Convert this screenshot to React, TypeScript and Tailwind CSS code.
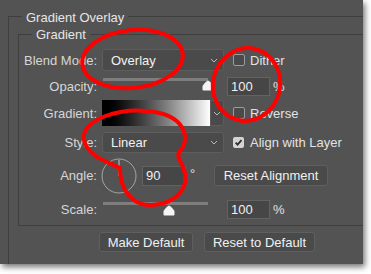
import React from 'react';

function Chevron() {
  return (
    <svg width="8" height="5" viewBox="0 0 8 5">
      <path d="M1 1 L4 4 L7 1" stroke="#b8b8b8" strokeWidth="1" fill="none" />
    </svg>
  );
}

function Checkbox({ checked = false }: { checked?: boolean }) {
  if (checked) {
    return (
      <span className="w-[11px] h-[11px] rounded-[2px] bg-[#d4d4d4] flex items-center justify-center">
        <svg width="9" height="9" viewBox="0 0 9 9">
          <path d="M1.6 4.6 L3.6 6.6 L7.5 2.2" stroke="#2e2e2e" strokeWidth="1.8" fill="none" />
        </svg>
      </span>
    );
  }
  return <span className="block w-[12px] h-[12px] rounded-[2px] border border-[#9c9c9c] bg-[#4a4a4a]" />;
}

function Slider({ pct, top = 5 }: { pct: number; top?: number }) {
  return (
    <div className="relative w-[105px] self-stretch ml-[6px]">
      <div className="mt-[3px] h-[3px] bg-[#7d7d7d]" />
      <svg
        className="absolute"
        style={{ left: `calc(${pct}% - 6px)`, top }}
        width="12"
        height="11"
        viewBox="0 0 12 11"
      >
        <path
          d="M6 0.5 C7 0.5 11.5 5 11.5 6.5 V9.5 Q11.5 10.5 10.5 10.5 H1.5 Q0.5 10.5 0.5 9.5 V6.5 C0.5 5 5 0.5 6 0.5 Z"
          fill="#f4f4f4"
        />
      </svg>
    </div>
  );
}

function Label({ children }: { children: React.ReactNode }) {
  return <div className="w-[78px] text-right text-[#d6d6d6] shrink-0">{children}</div>;
}

function NumberBox({ value, w = 43, h = 19 }: { value: string; w?: number; h?: number }) {
  return (
    <div
      className="bg-[#464646] border border-[#626262] text-[#f0f0f0] pl-[3px] flex items-center"
      style={{ width: w, height: h }}
    >
      {value}
    </div>
  );
}

export default function App() {
  return (
    <div className="w-[371px] h-[274px] bg-white relative overflow-hidden font-['Liberation_Sans',Arial,sans-serif] text-[13px] leading-none">
      <div className="w-[363px] h-[264px] bg-[#535353] shadow-[2px_3px_6px_rgba(0,0,0,0.55)] pt-[16px] pl-[8px]">
        {/* Gradient Overlay group */}
        <div className="h-full border-t border-l border-[#3f3f3f]">
          <div className="-mt-[9px] ml-[13px] w-fit px-[4px] h-[18px] flex items-center bg-[#535353] text-[#e6e6e6]">
            Gradient Overlay
          </div>

          {/* Gradient group */}
          <div className="mt-[8px] ml-[9px] h-[192px] border-t border-l border-b border-[#3f3f3f]">
            <div className="-mt-[10px] ml-[13px] w-fit px-[4px] h-[18px] flex items-center bg-[#535353] text-[#e6e6e6]">
              Gradient
            </div>

            {/* Blend Mode */}
            <div className="mt-[6px] h-[22px] flex items-center">
              <Label>Blend Mode:</Label>
              <div className="ml-[5px] w-[122px] h-[22px] rounded-[3px] bg-[#4a4a4a] border border-[#5d5d5d] flex items-center justify-between pl-[8px] pr-[5px] text-[#f2f2f2]">
                Overlay
                <Chevron />
              </div>
              <div className="ml-[9px]">
                <Checkbox />
              </div>
              <span className="ml-[5px] text-[#e2e2e2]">Dither</span>
            </div>

            {/* Opacity */}
            <div className="mt-[4px] h-[22px] flex items-center">
              <Label>Opacity:</Label>
              <Slider pct={100} />
              <div className="ml-[19px]">
                <NumberBox value="100" />
              </div>
              <span className="ml-[3px] text-[#e2e2e2]">%</span>
            </div>

            {/* Gradient */}
            <div className="mt-[3px] h-[26px] flex items-center">
              <Label>Gradient:</Label>
              <div className="ml-[5px] flex">
                <div className="w-[108px] h-[26px] bg-gradient-to-r from-black to-white" />
                <div className="w-[14px] h-[26px] bg-[#4a4a4a] border border-[#5d5d5d] rounded-r-[3px] flex items-center justify-center">
                  <Chevron />
                </div>
              </div>
              <div className="ml-[9px]">
                <Checkbox />
              </div>
              <span className="ml-[5px] text-[#e2e2e2]">Reverse</span>
            </div>

            {/* Style */}
            <div className="mt-[6px] h-[21px] flex items-center">
              <Label>Style:</Label>
              <div className="ml-[5px] w-[122px] h-[21px] rounded-[3px] bg-[#4a4a4a] border border-[#5d5d5d] flex items-center justify-between pl-[8px] pr-[5px] text-[#f2f2f2]">
                Linear
                <Chevron />
              </div>
              <div className="ml-[9px]">
                <Checkbox checked />
              </div>
              <span className="ml-[6px] text-[#e2e2e2]">Align with Layer</span>
            </div>

            {/* Angle */}
            <div className="mt-[5px] h-[35px] flex items-center">
              <Label>Angle:</Label>
              <svg className="ml-[4px]" width="36" height="36" viewBox="0 0 36 36">
                <circle cx="18" cy="18" r="17" stroke="#a6a6a6" strokeWidth="1" fill="none" />
                <path d="M18 2 V18" stroke="#c8c8c8" strokeWidth="1" />
              </svg>
              <div className="ml-[5px]">
                <NumberBox value="90" w={44} h={20} />
              </div>
              <span className="ml-[4px] w-[24px] self-start mt-[9px] text-[#e2e2e2]">°</span>
              <div className="w-[114px] h-[21px] rounded-[3px] bg-[#4a4a4a] border border-[#5f5f5f] flex items-center justify-center text-[#f0f0f0]">
                Reset Alignment
              </div>
            </div>

            {/* Scale */}
            <div className="mt-[6px] h-[20px] flex items-center">
              <Label>Scale:</Label>
              <Slider pct={63} top={6} />
              <div className="ml-[19px]">
                <NumberBox value="100" />
              </div>
              <span className="ml-[3px] text-[#e2e2e2]">%</span>
            </div>
          </div>

          {/* Buttons */}
          <div className="mt-[6px] ml-[90px] flex gap-[11px]">
            <div className="w-[94px] h-[20px] rounded-[3px] bg-[#4a4a4a] border border-[#5f5f5f] flex items-center justify-center text-[#f0f0f0]">
              Make Default
            </div>
            <div className="w-[111px] h-[20px] rounded-[3px] bg-[#4a4a4a] border border-[#5f5f5f] flex items-center justify-center text-[#f0f0f0]">
              Reset to Default
            </div>
          </div>
        </div>
      </div>

      {/* red annotations */}
      <svg className="absolute inset-0 pointer-events-none" width="371" height="274" viewBox="0 0 371 274">
        <g stroke="#ff0000" strokeWidth="4" fill="none" strokeLinejoin="round">
          <ellipse cx="132.5" cy="59" rx="50.5" ry="29" transform="rotate(-6 132.5 59)" />
          <ellipse cx="246.5" cy="84.5" rx="33.5" ry="36.5" transform="rotate(15 246.5 84.5)" />
          <path d="M179 152 C190 142 188 118 155 112 C120 106 80 120 84 140 C87 156 108 162 120 168 C120 190 132 206 152 205 C175 204 190 188 184 170 C182 162 176 158 179 152 Z" />
        </g>
      </svg>
    </div>
  );
}
